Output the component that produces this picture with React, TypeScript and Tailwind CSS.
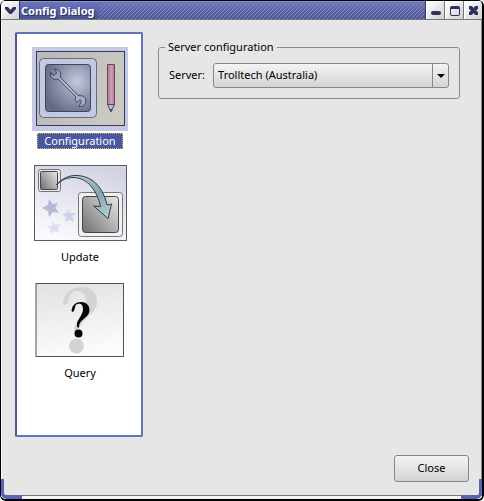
import React, { useState } from "react";

function ConfigurationIcon() {
  return (
    <svg width="96" height="84" viewBox="0 0 96 84" fill="none" aria-hidden="true">
      <defs>
        <linearGradient id="cfgBack" x1="0" y1="0" x2="1" y2="0.3">
          <stop offset="0" stopColor="#b9b7b8" />
          <stop offset="1" stopColor="#cac9c2" />
        </linearGradient>
        <radialGradient id="cfgScreen" cx="0.7" cy="0.36" r="0.75">
          <stop offset="0" stopColor="#c6cae0" />
          <stop offset="0.5" stopColor="#9196ae" />
          <stop offset="1" stopColor="#666b84" />
        </radialGradient>
        <linearGradient id="cfgWrench" x1="0" y1="0" x2="1" y2="1">
          <stop offset="0" stopColor="#8d92ac" />
          <stop offset="0.5" stopColor="#b9bed6" />
          <stop offset="1" stopColor="#a0a5be" />
        </linearGradient>
        <linearGradient id="cfgPencil" x1="0" y1="0" x2="1" y2="0">
          <stop offset="0" stopColor="#a9798b" />
          <stop offset="0.6" stopColor="#d3a0b1" />
          <stop offset="1" stopColor="#a06f81" />
        </linearGradient>
      </defs>
      <rect width="96" height="84" fill="#c5cae2" />
      <rect x="4.5" y="4.5" width="88" height="74" fill="url(#cfgBack)" stroke="#353a5c" />
      <rect x="7.5" y="11.500" width="57" height="59" rx="4" fill="#c3c9e1" stroke="#656b8b" />
      <rect x="13.500" y="17.500" width="45" height="47" rx="3" fill="url(#cfgScreen)" stroke="#3f4566" />
      <path
        d="M22 22L25.500 22.500L28.500 25L28.500 30.500L46 48.500L51 49L54 51.500L53.500 56.500L50 59.500H47L49.500 54.500L48 52.500L45 55.500L43 52.500L44 50L26 32L22 32.500L18.500 29.500V25L21 28.500L24.500 26.500L24 24Z"
        fill="url(#cfgWrench)"
        stroke="#3c4264"
        strokeWidth="0.9"
        strokeLinejoin="round"
      />
      <path d="M75.500 17.500H82.500V57.500H75.500Z" fill="url(#cfgPencil)" stroke="#684765" />
      <path d="M75.500 57.500H82.500L79 65Z" fill="#b5b9d2" stroke="#454a6d" />
      <path d="M78 62H80L79 65Z" fill="#343958" />
    </svg>
  );
}

function UpdateIcon() {
  return (
    <svg width="96" height="84" viewBox="0 0 96 84" fill="none" aria-hidden="true">
      <defs>
        <linearGradient id="updBack" x1="0.7" y1="0" x2="0.35" y2="1">
          <stop offset="0" stopColor="#d1d3e5" />
          <stop offset="1" stopColor="#fafafd" />
        </linearGradient>
        <linearGradient id="updScreen" x1="1" y1="0.1" x2="0" y2="0.9">
          <stop offset="0" stopColor="#e3e3e3" />
          <stop offset="1" stopColor="#747474" />
        </linearGradient>
        <linearGradient id="updArrow" x1="0" y1="0" x2="1" y2="1">
          <stop offset="0" stopColor="#c4d8df" />
          <stop offset="0.6" stopColor="#85a5b1" />
          <stop offset="1" stopColor="#bdd3da" />
        </linearGradient>
      </defs>
      <rect x="2.500" y="2.500" width="92" height="75" fill="url(#updBack)" stroke="#5a5a5e" />
      <rect x="6.500" y="6.500" width="22" height="22" rx="2" fill="#ebebeb" stroke="#737373" />
      <rect x="8.500" y="8.500" width="17" height="18" rx="1" fill="url(#updScreen)" stroke="#484848" />
      <rect x="46.500" y="29.500" width="44" height="44" rx="3" fill="#f1f1f1" stroke="#777777" />
      <rect x="50.500" y="33.500" width="36" height="36" rx="3" fill="url(#updScreen)" stroke="#444444" />
      <path
        d="M24.500 22C30 15 38 12 46 12.500C62 14 71 25 75 42L79.500 41L76 55.500L61.500 43L68.500 43.500C65 28 56 15 42 14.500C35 14.500 29 17 24.500 22Z"
        fill="url(#updArrow)"
        stroke="#323c40"
      />
      <path d="M17 36L21 41L26 40L23.500 45L27 50L21 49L17 54L16 48L10 45L16 42Z" fill="#b7bad3" />
      <path d="M36 46L38 50L44 50L40.500 54L42 59L37 57L33 59L34 54L30 51L35 50Z" fill="#d0d2ea" />
      <path d="M20 58L23 62L29 61L26 65L27 70L22 68L18 71L19 66L15 63L20 63Z" fill="#dcddf6" />
    </svg>
  );
}

function QueryIcon() {
  return (
    <svg width="96" height="84" viewBox="0 0 96 84" fill="none" aria-hidden="true">
      <defs>
        <linearGradient id="qryBack" x1="0" y1="0" x2="0.2" y2="1">
          <stop offset="0" stopColor="#e1e1e1" />
          <stop offset="1" stopColor="#fbfbfb" />
        </linearGradient>
      </defs>
      <rect x="4" y="4.500" width="87.500" height="73" fill="url(#qryBack)" stroke="#525252" />
      <path
        d="M31 25C31 14 40 8 50 8C59 8 65 14 65 23C65 37 46 39 47 54C48 57 46 60 44 56C37 46 54 37 54 23C54 16 51 12 44 12C38 12 38 18 36 23C35 26 32 27 31 25Z"
        fill="#d4d4d4"
      />
      <circle cx="44.500" cy="67" r="7.500" fill="#d4d4d4" />
      <path
        d="M39.500 32C40 26 44 23 49 23C54 23 57.500 26 57.500 31C57.500 39 47 40 47 48L46 49C42 42 51 38 51 30C51 26 49 24 46 25C42 25 44 30 41 33Z"
        fill="#050505"
      />
      <circle cx="46.500" cy="54.500" r="4" fill="#050505" />
    </svg>
  );
}

const pages = [
  { name: "Configuration", Icon: ConfigurationIcon },
  { name: "Update", Icon: UpdateIcon },
  { name: "Query", Icon: QueryIcon },
];

function TitleButton({ label, children }: { label: string; children: React.ReactNode }) {
  return (
    <button
      type="button"
      aria-label={label}
      className="flex h-full w-[18px] items-center justify-center border-t border-l border-white bg-linear-to-br from-white to-[#d0d0d0]"
    >
      {children}
    </button>
  );
}

function TitleBar() {
  return (
    <header className="flex h-5 border-t border-b border-t-black border-b-[#777777] bg-[#303665]">
      <TitleButton label="Window menu">
        <svg width="13" height="9" viewBox="0 0 13 9" aria-hidden="true">
          <path d="M1 1H4L6.500 4L9 1H12V3L7.500 8H5.500L1 3Z" fill="#2c315d" />
        </svg>
      </TitleButton>
      <div className="ml-px flex h-full flex-1 items-center border-t border-[#8b93d2] bg-linear-to-b from-[#6b74c0] to-[#4a5295]">
        <h1 className="px-px text-[11px] leading-4 font-bold text-white [text-shadow:1px_1px_1px_#252b55]">
          Config Dialog
        </h1>
        <svg className="ml-1 h-4 min-w-0 flex-1" aria-hidden="true">
          <defs>
            <pattern id="hatch" width="4" height="4" patternUnits="userSpaceOnUse">
              <path d="M0 3H1V4H0ZM1 2H2V3H1ZM2 1H3V2H2ZM3 0H4V1H3Z" fill="#9298b4" fillOpacity="0.75" shapeRendering="crispEdges" />
            </pattern>
          </defs>
          <rect width="100%" height="100%" fill="url(#hatch)" />
        </svg>
      </div>
      <div className="ml-px flex h-full gap-px bg-[#777777]">
        <TitleButton label="Minimize">
          <span className="mt-1 h-1 w-2.5 rounded-xs bg-[#2c315d]" />
        </TitleButton>
        <TitleButton label="Maximize">
          <span className="h-2.5 w-2.5 rounded-xs border border-t-3 border-[#2c315d]" />
        </TitleButton>
        <TitleButton label="Close window">
          <svg width="11" height="11" viewBox="0 0 11 11" aria-hidden="true">
            <path d="M1 1H4L5.500 3L7 1H10V4L8 5.500L10 7V10H7L5.500 8L4 10H1V7L3 5.500L1 4Z" fill="#2c315d" />
          </svg>
        </TitleButton>
      </div>
    </header>
  );
}

export default function App() {
  const [current, setCurrent] = useState("Configuration");
  return (
    <div className="relative flex min-h-screen flex-col overflow-hidden rounded-t-md rounded-b-md border-r-2 border-b-2 border-l border-black bg-[#e6e6e6] font-['Noto_Sans','Open_Sans',sans-serif] text-[11px] text-black">
      <TitleBar />
      <main className="flex flex-1 flex-col gap-[18px] border-r border-l border-r-[#888888] border-l-[#f7f7f7] pt-3 pr-3 pb-[13px] pl-[13px]">
        <div className="flex flex-1 gap-[15px]">
          <nav
            aria-label="Pages"
            className="flex w-32 shrink-0 flex-col items-center gap-[14px] rounded-xs border-2 border-[#6672b8] border-l-[#4c569f] bg-white pt-[13px] pl-0.5"
          >
            {pages.map(({ name, Icon }) => (
              <button
                key={name}
                type="button"
                aria-pressed={current === name}
                onClick={() => setCurrent(name)}
                className="group flex flex-col items-center gap-0.5"
              >
                <Icon />
                <span className="h-4 border border-dotted border-transparent px-1.5 leading-[14px] group-aria-pressed:border-[#c3bd5d] group-aria-pressed:bg-[#4c569f] group-aria-pressed:text-white">
                  {name}
                </span>
              </button>
            ))}
          </nav>
          <fieldset className="mt-2 mr-[9px] h-[59px] min-w-0 flex-1 rounded-[3px] border border-[#8b8b8b] px-2.5">
            <legend className="-ml-1 px-[3px] leading-[14px]">Server configuration</legend>
            <div className="flex items-center gap-2 pt-[9px]">
              <label htmlFor="server">Server:</label>
              <div className="relative min-w-0 flex-1">
                <select
                  id="server"
                  className="block h-[25px] w-full appearance-none rounded-[3px] border border-[#888888] bg-linear-to-b from-[#f4f4f4] to-[#d3d3d3] pr-5 pl-1 outline-none"
                >
                  <option>Trolltech (Australia)</option>
                </select>
                <span className="pointer-events-none absolute inset-y-0 right-0 flex w-[17px] items-center justify-center border-l border-[#888888]">
                  <svg width="8" height="4" viewBox="0 0 8 4" aria-hidden="true">
                    <path d="M0 0H8L4 4Z" fill="#000000" />
                  </svg>
                </span>
              </div>
            </div>
          </fieldset>
        </div>
        <button
          type="button"
          className="h-[27px] w-[75px] self-end rounded-[3px] border border-[#858585] bg-linear-to-b from-[#f4f4f4] to-[#d3d3d3]"
        >
          Close
        </button>
      </main>
      <footer className="h-1 border-t border-[#777777] bg-[#f4f4f4]" />
      <span className="absolute bottom-0 left-0 h-5 w-[21px] rounded-bl-md border-b-4 border-l-3 border-[#5963b4]" />
      <span className="absolute right-0 bottom-0 h-5 w-[21px] rounded-br-md border-r-3 border-b-4 border-[#5963b4]" />
    </div>
  );
}
